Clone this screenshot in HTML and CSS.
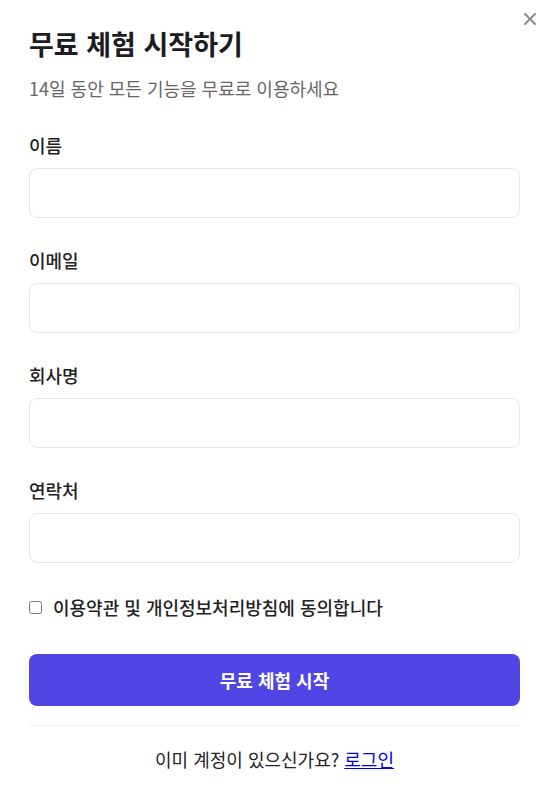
FILE: index.html
```html
<!DOCTYPE html>
<html lang="ko">
<head>
<meta charset="utf-8">
<link rel="stylesheet" href="styles.css">
</head>
<body>
<div class="modal">
  <button class="close" aria-label="닫기">
    <svg width="12" height="12" viewBox="0 0 12 12"><path d="M1 1L11 11M11 1L1 11" stroke="#8a8a8a" stroke-width="2" stroke-linecap="round"/></svg>
  </button>
  <h1 class="title">무료 체험 시작하기</h1>
  <p class="subtitle">14일 동안 모든 기능을 무료로 이용하세요</p>
  <form class="form">
    <div class="field">
      <label class="label">이름</label>
      <input class="input" type="text">
    </div>
    <div class="field">
      <label class="label">이메일</label>
      <input class="input" type="email">
    </div>
    <div class="field">
      <label class="label">회사명</label>
      <input class="input" type="text">
    </div>
    <div class="field">
      <label class="label">연락처</label>
      <input class="input" type="tel">
    </div>
    <label class="agree"><input type="checkbox" class="check"> 이용약관 및 개인정보처리방침에 동의합니다</label>
    <button type="button" class="submit">무료 체험 시작</button>
  </form>
  <div class="footer">이미 계정이 있으신가요? <a href="#" class="link">로그인</a></div>
</div>
</body>
</html>
```
FILE: styles.css
```css
* { box-sizing: border-box; }
body {
  margin: 0;
  background: #fff;
  font-family: "Noto Sans CJK KR", "Noto Sans", sans-serif;
  color: #222;
}
.modal {
  position: relative;
  padding: 26px 31px 20px 29px;
}
.close {
  position: absolute;
  top: 13px;
  right: 15px;
  border: 0;
  background: none;
  padding: 0;
  cursor: pointer;
  line-height: 0;
}
.title {
  margin: 0;
  font-size: 27px;
  font-weight: 700;
  line-height: 36px;
  color: #1c1c22;
}
.subtitle {
  margin: 13px 0 0;
  font-size: 18px;
  line-height: 26px;
  color: #666;
}
.form {
  margin-top: 31px;
  display: flex;
  flex-direction: column;
}
.field {
  display: flex;
  flex-direction: column;
  margin-bottom: 29px;
}
.label {
  font-size: 18px;
  font-weight: 500;
  line-height: 26px;
  margin-bottom: 10px;
  color: #222;
}
.input {
  height: 50px;
  border: 1px solid #e5e7eb;
  border-radius: 8px;
  padding: 0 14px;
  font-size: 16px;
}
.agree {
  display: flex;
  align-items: center;
  gap: 11px;
  font-size: 18px;
  font-weight: 500;
  line-height: 26px;
  margin-top: 2px;
}
.check {
  margin: 1px 0 0;
  width: 13px;
  height: 13px;
}
.submit {
  margin-top: 34px;
  height: 52px;
  border: 0;
  border-radius: 8px;
  background: #4f46e5;
  color: #fff;
  font-family: inherit;
  font-size: 18px;
  font-weight: 700;
}
.footer {
  margin-top: 19px;
  border-top: 1px solid #eceef1;
  padding-top: 20px;
  text-align: center;
  font-size: 18px;
  line-height: 26px;
  color: #222;
}
.link { color: #0000ee; }
```
